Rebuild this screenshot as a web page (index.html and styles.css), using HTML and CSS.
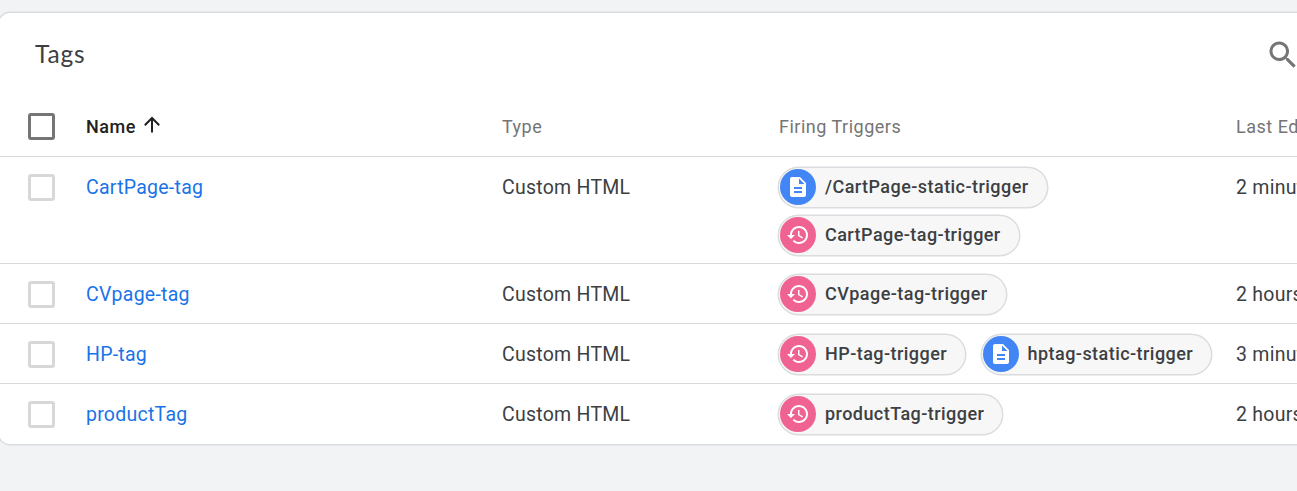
FILE: index.html
```html
<!DOCTYPE html>
<html lang="en">
<head>
<meta charset="utf-8">
<title>Tags</title>
<link rel="stylesheet" href="styles.css">
</head>
<body>
<svg class="defs" aria-hidden="true">
  <symbol id="page" viewBox="0 0 24 24"><path d="M14 2H6c-1.100 0-1.990.9-1.990 2L4 20c0 1.100.89 2 1.990 2H18c1.100 0 2-.9 2-2V8l-6-6zm2 16H8v-2h8v2zm0-4H8v-2h8v2zm-3-5V3.500L18.500 9H13z"/></symbol>
  <symbol id="history" viewBox="0 0 24 24"><path d="M13 3c-4.970 0-9 4.030-9 9H1l3.890 3.890.07.14L9 12H6c0-3.870 3.130-7 7-7s7 3.130 7 7-3.130 7-7 7c-1.930 0-3.680-.79-4.940-2.060l-1.420 1.420C8.270 19.990 10.510 21 13 21c4.970 0 9-4.030 9-9s-4.030-9-9-9zm-1 5v5l4.280 2.540.72-1.210-3.500-2.080V8H12z"/></symbol>
</svg>
<main class="card">
  <header class="toolbar">
    <h1 class="title">Tags</h1>
    <svg class="search" viewBox="0 0 24 24"><path d="M15.500 14h-.79l-.28-.27C15.410 12.590 16 11.110 16 9.500 16 5.910 13.090 3 9.500 3S3 5.910 3 9.500 5.910 16 9.500 16c1.610 0 3.090-.59 4.230-1.570l.27.28v.79l5 4.990L20.490 19l-4.990-5zm-6 0C7.010 14 5 11.990 5 9.500S7.010 5 9.500 5 14 7.010 14 9.500 11.990 14 9.500 14z"/></svg>
  </header>
  <div class="row head">
    <span class="checkbox dark"></span>
    <span class="sorted">Name<svg class="arrow" viewBox="0 0 18 18"><path d="M9 16.500V2M1.800 9.200L9 2l7.200 7.200"/></svg></span>
    <span>Type</span>
    <span>Firing Triggers</span>
    <span>Last Edited</span>
  </div>
  <div class="row">
    <span class="checkbox"></span>
    <a class="name">CartPage-tag</a>
    <span class="text">Custom HTML</span>
    <div class="chips">
      <span class="chip"><span class="dot blue"><svg class="glyph"><use href="#page"/></svg></span>/CartPage-static-trigger</span>
      <span class="chip"><span class="dot pink"><svg class="glyph"><use href="#history"/></svg></span>CartPage-tag-trigger</span>
    </div>
    <span class="text">2 minutes ago</span>
  </div>
  <div class="row">
    <span class="checkbox"></span>
    <a class="name">CVpage-tag</a>
    <span class="text">Custom HTML</span>
    <div class="chips">
      <span class="chip"><span class="dot pink"><svg class="glyph"><use href="#history"/></svg></span>CVpage-tag-trigger</span>
    </div>
    <span class="text">2 hours ago</span>
  </div>
  <div class="row">
    <span class="checkbox"></span>
    <a class="name">HP-tag</a>
    <span class="text">Custom HTML</span>
    <div class="chips">
      <span class="chip"><span class="dot pink"><svg class="glyph"><use href="#history"/></svg></span>HP-tag-trigger</span>
      <span class="chip"><span class="dot blue"><svg class="glyph"><use href="#page"/></svg></span>hptag-static-trigger</span>
    </div>
    <span class="text">3 minutes ago</span>
  </div>
  <div class="row">
    <span class="checkbox"></span>
    <a class="name">productTag</a>
    <span class="text">Custom HTML</span>
    <div class="chips">
      <span class="chip"><span class="dot pink"><svg class="glyph"><use href="#history"/></svg></span>productTag-trigger</span>
    </div>
    <span class="text">2 hours ago</span>
  </div>
</main>
</body>
</html>
```
FILE: styles.css
```css
* { box-sizing: border-box; }
body {
  margin: 0;
  padding-top: 12px;
  height: 491px;
  overflow: hidden;
  background: #f1f3f4;
  font-family: Roboto, "Liberation Sans", sans-serif;
  color: #3c4043;
}
.defs { display: none; }
.card {
  width: 1500px;
  margin-left: -2px;
  background: #fff;
  border: 1px solid #dadce0;
  border-radius: 12px;
  box-shadow: 0 0 0 0.5px #dadce0;
}
.toolbar {
  display: flex;
  justify-content: space-between;
  align-items: center;
  width: 1302px;
  height: 84px;
  padding-left: 36px;
}
.title {
  margin: 0 0 3px;
  font-family: Lato, sans-serif;
  font-size: 24.5px;
  font-weight: 400;
  letter-spacing: 0.8px;
}
.search { width: 36px; height: 36px; fill: #757575; }
.row {
  display: grid;
  grid-template-columns: 58px 416px 276px 458px 200px;
  align-items: start;
  min-height: 60px;
  padding: 10px 0 7px 29px;
  border-bottom: 1px solid #dadada;
}
.row:last-child { border-bottom: 0; }
.head {
  height: 60px;
  align-items: center;
  padding: 0 0 0 29px;
  font-size: 18px;
  font-weight: 400;
  letter-spacing: 0.5px;
  color: #757575;
}
.head span:nth-child(4) { padding-left: 1px; }
.sorted { display: flex; align-items: center; color: #212121; font-weight: 500; }
.arrow {
  width: 18px;
  height: 18px;
  margin: -3px 0 0 7px;
  fill: none;
  stroke: #212121;
  stroke-width: 2;
}
.checkbox {
  width: 27px;
  height: 27px;
  margin-top: 7px;
  border: 3px solid #d8d8d8;
  border-radius: 3px;
}
.checkbox.dark { margin: 0; border-color: #757575; }
.name, .text { font-size: 19.5px; line-height: 41px; letter-spacing: 0.25px; }
.name { color: #1a73e8; }
.chips { display: flex; flex-wrap: wrap; gap: 7px 14.5px; margin-right: 15px; }
.chip {
  display: flex;
  align-items: center;
  height: 41px;
  padding: 0 18px 2px 1px;
  background: #f7f7f7;
  border: 1px solid #dadce0;
  box-shadow: 0 0 0 0.5px #dadce0;
  border-radius: 21px;
  font-size: 18px;
  font-weight: 500;
  letter-spacing: 0.45px;
  white-space: nowrap;
}
.dot {
  display: flex;
  align-items: center;
  justify-content: center;
  width: 36px;
  height: 36px;
  margin: 1px 9px 0 0;
  border-radius: 50%;
}
.blue { background: #4285f4; }
.pink { background: #f06292; }
.glyph { width: 24px; height: 24px; fill: #fff; }
```
